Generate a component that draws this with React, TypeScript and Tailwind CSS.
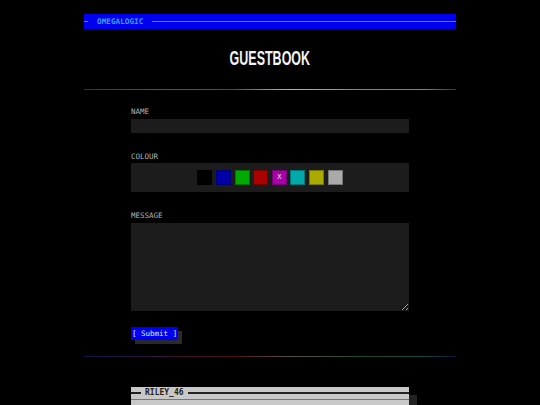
import { useState } from 'react'

const SWATCHES = [
  { id: 'black', bg: 'bg-[#000000]' },
  { id: 'blue', bg: 'bg-[#0000aa]' },
  { id: 'green', bg: 'bg-[#00aa00]' },
  { id: 'red', bg: 'bg-[#aa0000]' },
  { id: 'magenta', bg: 'bg-[#aa00aa]' },
  { id: 'cyan', bg: 'bg-[#00aaaa]' },
  { id: 'yellow', bg: 'bg-[#aaaa00]' },
  { id: 'grey', bg: 'bg-[#aaaaaa]' },
]

const mono = "font-['DejaVu_Sans_Mono',monospace]"

// rainbow rule, built from gradient segments
function Rainbow({ dim = false }: { dim?: boolean }) {
  return (
    <div className={`flex h-px w-full ${dim ? 'opacity-45' : ''}`}>
      <div className="h-px w-[20%] bg-linear-to-r from-[#1e2c88] to-[#7a3086]" />
      <div className="h-px w-[20%] bg-linear-to-r from-[#7a3086] to-[#a81e1e]" />
      <div className="h-px w-[15%] bg-linear-to-r from-[#a81e1e] to-[#ccb858]" />
      <div className="h-px w-[20%] bg-linear-to-r from-[#ccb858] to-[#48a838]" />
      <div className="h-px w-[17%] bg-linear-to-r from-[#48a838] to-[#36a09a]" />
      <div className="h-px w-[8%] bg-linear-to-r from-[#36a09a] to-[#1e2c88]" />
    </div>
  )
}

export default function App() {
  const [colour, setColour] = useState('magenta')

  return (
    <div className="h-[405px] w-full overflow-hidden bg-black pt-[14px]">
      <div className="mx-auto w-[372px]">
        <div className="flex h-[15px] items-center bg-[#0000f0]">
          <div className="h-px w-[4px] bg-[#b050ff]" />
          <span className={`${mono} px-[9px] text-[7.7px] font-bold leading-none text-[#3aa0ff]`}>OMEGALOGIC</span>
          <div className="h-px flex-1 bg-[#b050ff]" />
        </div>

        <div className="flex h-[60px] items-center justify-center">
          <h1 className="inline-block scale-x-[0.64] font-['Liberation_Sans',Arial,sans-serif] text-[19.5px] font-bold text-[#f2f2f2]">
            GUESTBOOK
          </h1>
        </div>
        <Rainbow />

        <form className="mx-auto flex w-[278px] flex-col pt-[17px]" onSubmit={(e) => e.preventDefault()}>
          <label className={`${mono} h-[10px] text-[7.5px] leading-[10px] text-[#b4b4b4]`}>NAME</label>
          <input className="mt-[2px] h-[14px] w-full bg-[#1c1c1c] outline-none" />

          <label className={`${mono} mt-[19px] h-[10px] text-[7.5px] leading-[10px] text-[#b4b4b4]`}>COLOUR</label>
          <div className="mt-[1px] flex h-[29px] items-center justify-center gap-[3.6px] bg-[#1c1c1c]">
            {SWATCHES.map((s) => (
              <button
                key={s.id}
                type="button"
                onClick={() => setColour(s.id)}
                className={`${s.bg} ${mono} flex h-[15px] w-[15px] items-center justify-center border border-black/30 text-[7px] leading-none text-[#e0e0e0]`}
              >
                {colour === s.id ? 'X' : ''}
              </button>
            ))}
          </div>

          <label className={`${mono} mt-[19px] h-[10px] text-[7.5px] leading-[10px] text-[#b4b4b4]`}>MESSAGE</label>
          <textarea className="mt-[2px] block h-[88px] w-full bg-[#1c1c1c] outline-none" />

          <div className="mt-[16px] flex">
            <button
              type="submit"
              className={`${mono} h-[13px] bg-[#0000f0] px-[1px] text-[7.5px] leading-[13px] text-[#e8e8ff] shadow-[4px_4px_0_#2a2a2a]`}
            >
              [ Submit ]
            </button>
          </div>
        </form>

        <div className="mt-[16px]">
          <Rainbow dim />
        </div>

        <div className="mx-auto mt-[30px] w-[278px] bg-[#c8c8c8] shadow-[8px_8px_0_#222]">
          <div className="flex h-[12px] items-center">
            <div className="h-[2px] w-[10px] bg-[#222]" />
            <span className={`${mono} px-[4px] text-[8px] font-bold leading-none text-[#222]`}>RILEY_46</span>
            <div className="h-[2px] flex-1 bg-[#222]" />
          </div>
          <div className="h-px bg-[#777]" />
          <div className="h-[20px]" />
        </div>
      </div>
    </div>
  )
}
